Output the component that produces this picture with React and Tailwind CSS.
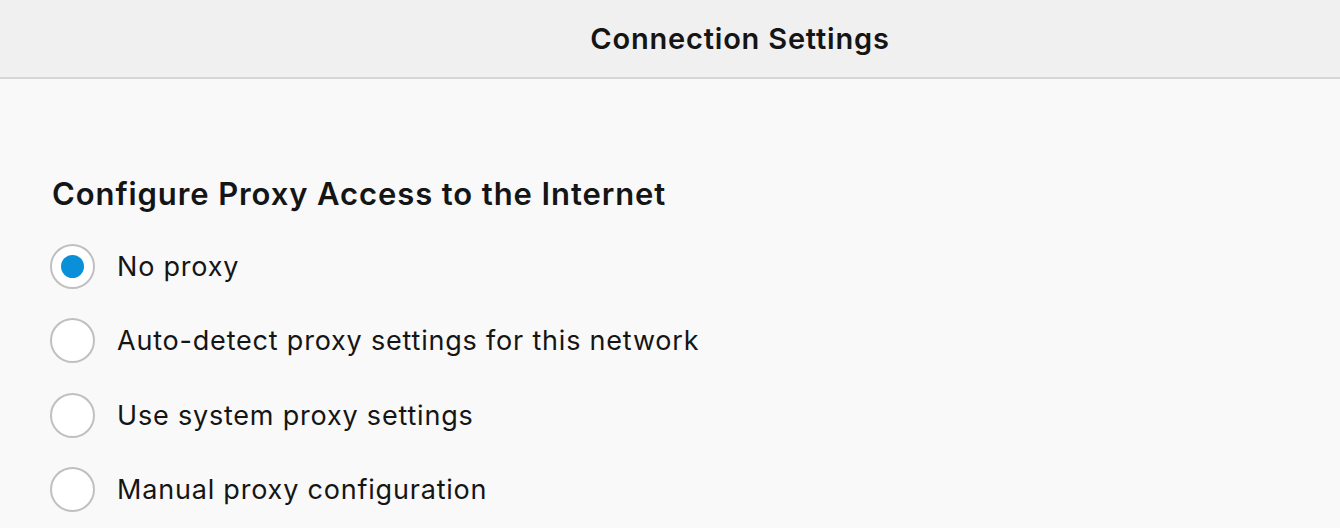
export default function App() {
  const options = [
    { label: "No proxy", checked: true },
    { label: "Auto-detect proxy settings for this network", checked: false },
    { label: "Use system proxy settings", checked: false },
    { label: "Manual proxy configuration", checked: false },
  ];
  return (
    <div className="w-[1340px] h-[528px] overflow-hidden bg-[#f9f9f9] text-[#151515]" style={{ fontFamily: 'Inter, "Noto Sans", sans-serif' }}>
      <div className="h-[79px] bg-[#f0f0f0] border-b-2 border-[#d6d6da] flex items-center justify-center">
        <h1 className="text-[29px] font-semibold leading-none pl-[140px] tracking-[0.8px]">Connection Settings</h1>
      </div>
      <div className="pl-[50px] pt-[95px]">
        <h2 className="text-[31px] font-semibold leading-[40px] pl-[2px] tracking-[0.9px]">Configure Proxy Access to the Internet</h2>
        <div className="flex flex-col gap-[30.5px] mt-[30px]">
          {options.map((o) => (
            <label key={o.label} className="flex items-center h-[44px]">
              <span className="w-[45px] h-[45px] rounded-full border-2 border-[#c0c0c0] bg-white flex items-center justify-center shrink-0">
                {o.checked && <span className="w-[23px] h-[23px] rounded-full bg-[#0a90d9]" />}
              </span>
              <span className="ml-[22px] text-[27px] leading-none tracking-[0.8px]">{o.label}</span>
            </label>
          ))}
        </div>
      </div>
    </div>
  );
}
